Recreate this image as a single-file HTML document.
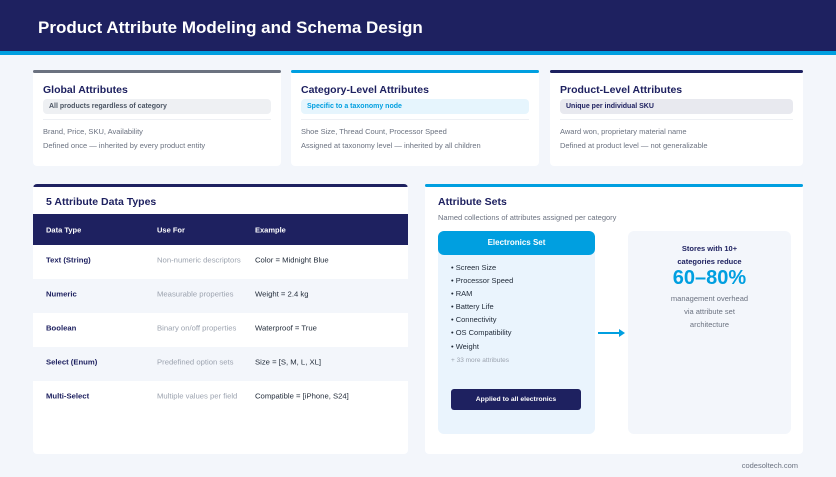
<!DOCTYPE html>
<html><head><style>
*{margin:0;padding:0;box-sizing:border-box}
body{width:836px;height:477px;background:#f3f6fb;font-family:"Liberation Sans",sans-serif;position:relative;overflow:hidden}
.hdr{position:absolute;left:0;top:0;width:836px;height:51px;background:#1e2160}
.hdr h1{position:absolute;left:38px;top:18px;color:#fff;font-size:17px;font-weight:bold}
.stripe{position:absolute;left:0;top:51px;width:836px;height:4px;background:#009fe0}
.card{position:absolute;background:#fff;border-radius:4px}
.tc{top:70px;height:96px}
.bar{position:absolute;left:0;top:0;right:0;height:3px;border-radius:2px}
.tt{position:absolute;left:10px;top:14px;font-size:10.5px;font-weight:bold;color:#1e2160}
.badge{position:absolute;left:10px;right:10px;top:29px;height:15px;border-radius:4px;font-size:7px;font-weight:bold;padding:4px 6px 0}
.div{position:absolute;left:10px;right:10px;top:49px;height:1px;background:#eef0f4}
.ln{position:absolute;left:10px;font-size:7.5px;color:#6b7280}
.th{position:absolute;left:0;right:0;top:30px;height:31px;background:#1e2160;color:#fff;font-size:7.5px;font-weight:bold}
.row{position:absolute;left:0;right:0;height:34px;font-size:7.7px}
.c{position:absolute;top:15px;transform:translateY(-50%)}
.th .c{top:50%}
.c1{left:13px;font-weight:bold;color:#1e2160}.c2{left:124px;color:#9ca3af}.c3{left:222px;color:#1f2937}
</style></head><body>
<div class="hdr"><h1>Product Attribute Modeling and Schema Design</h1></div>
<div class="stripe"></div>

<div class="card tc" style="left:33px;width:248px"><div class="bar" style="background:#6b7280"></div>
<div class="tt">Global Attributes</div><div class="badge" style="background:#eef0f3;color:#4b5563">All products regardless of category</div><div class="div"></div>
<div class="ln" style="top:57px">Brand, Price, SKU, Availability</div><div class="ln" style="top:71px">Defined once — inherited by every product entity</div></div>

<div class="card tc" style="left:291px;width:248px"><div class="bar" style="background:#009fe0"></div>
<div class="tt">Category-Level Attributes</div><div class="badge" style="background:#e6f5fd;color:#009fe0">Specific to a taxonomy node</div><div class="div"></div>
<div class="ln" style="top:57px">Shoe Size, Thread Count, Processor Speed</div><div class="ln" style="top:71px">Assigned at taxonomy level — inherited by all children</div></div>

<div class="card tc" style="left:550px;width:253px"><div class="bar" style="background:#1e2160"></div>
<div class="tt">Product-Level Attributes</div><div class="badge" style="background:#e8e9ef;color:#1e2160">Unique per individual SKU</div><div class="div"></div>
<div class="ln" style="top:57px">Award won, proprietary material name</div><div class="ln" style="top:71px">Defined at product level — not generalizable</div></div>

<div class="card" style="left:33px;top:184px;width:375px;height:270px;overflow:hidden"><div class="bar" style="background:#1e2160"></div>
<div style="position:absolute;left:13px;top:12px;font-size:10.5px;font-weight:bold;color:#1e2160">5 Attribute Data Types</div>
<div class="th"><span class="c" style="left:13px">Data Type</span><span class="c" style="left:124px">Use For</span><span class="c" style="left:222px">Example</span></div>
<div class="row" style="top:61px;background:#fff"><span class="c c1">Text (String)</span><span class="c c2">Non-numeric descriptors</span><span class="c c3">Color = Midnight Blue</span></div>
<div class="row" style="top:95px;background:#f3f6fb"><span class="c c1">Numeric</span><span class="c c2">Measurable properties</span><span class="c c3">Weight = 2.4 kg</span></div>
<div class="row" style="top:129px;background:#fff"><span class="c c1">Boolean</span><span class="c c2">Binary on/off properties</span><span class="c c3">Waterproof = True</span></div>
<div class="row" style="top:163px;background:#f3f6fb"><span class="c c1">Select (Enum)</span><span class="c c2">Predefined option sets</span><span class="c c3">Size = [S, M, L, XL]</span></div>
<div class="row" style="top:197px;background:#fff"><span class="c c1">Multi-Select</span><span class="c c2">Multiple values per field</span><span class="c c3">Compatible = [iPhone, S24]</span></div>
</div>

<div class="card" style="left:425px;top:184px;width:378px;height:270px"><div class="bar" style="background:#009fe0"></div>
<div style="position:absolute;left:13px;top:12px;font-size:10.5px;font-weight:bold;color:#1e2160">Attribute Sets</div>
<div style="position:absolute;left:13px;top:29px;font-size:7.5px;color:#6b7280">Named collections of attributes assigned per category</div>
<div style="position:absolute;left:13px;top:47px;width:157px;height:203px;background:#eaf4fd;border-radius:6px">
<div style="height:24px;background:#009fe0;border-radius:6px;color:#fff;font-size:8px;font-weight:bold;text-align:center;line-height:24px">Electronics Set</div>
<div style="position:absolute;left:13px;top:30px;font-size:7.5px;color:#1f2937;line-height:13.1px">• Screen Size<br>• Processor Speed<br>• RAM<br>• Battery Life<br>• Connectivity<br>• OS Compatibility<br>• Weight<br><span style="color:#9ca3af;font-size:6.5px">+ 33 more attributes</span></div>
<div style="position:absolute;left:13px;top:158px;width:130px;height:21px;background:#1e2160;border-radius:3px;color:#fff;font-size:6.8px;font-weight:bold;text-align:center;line-height:21px">Applied to all electronics</div>
</div>
<div style="position:absolute;left:173px;top:148px;width:22px;height:1.5px;background:#009fe0"></div>
<div style="position:absolute;left:194px;top:145px;border-left:6px solid #009fe0;border-top:4px solid transparent;border-bottom:4px solid transparent"></div>
<div style="position:absolute;left:203px;top:47px;width:163px;height:203px;background:#f3f6fb;border-radius:6px;text-align:center">
<div style="margin-top:11px;font-size:7.5px;font-weight:bold;color:#1e2160;line-height:13px">Stores with 10+<br>categories reduce</div>
<div style="font-size:20px;font-weight:bold;color:#009fe0;line-height:20px">60–80%</div>
<div style="margin-top:4px;font-size:7.5px;color:#6b7280;line-height:13px">management overhead<br>via attribute set<br>architecture</div>
</div>
</div>
<div style="position:absolute;right:38px;top:461px;font-size:7.5px;color:#6b7280">codesoltech.com</div>
</body></html>
